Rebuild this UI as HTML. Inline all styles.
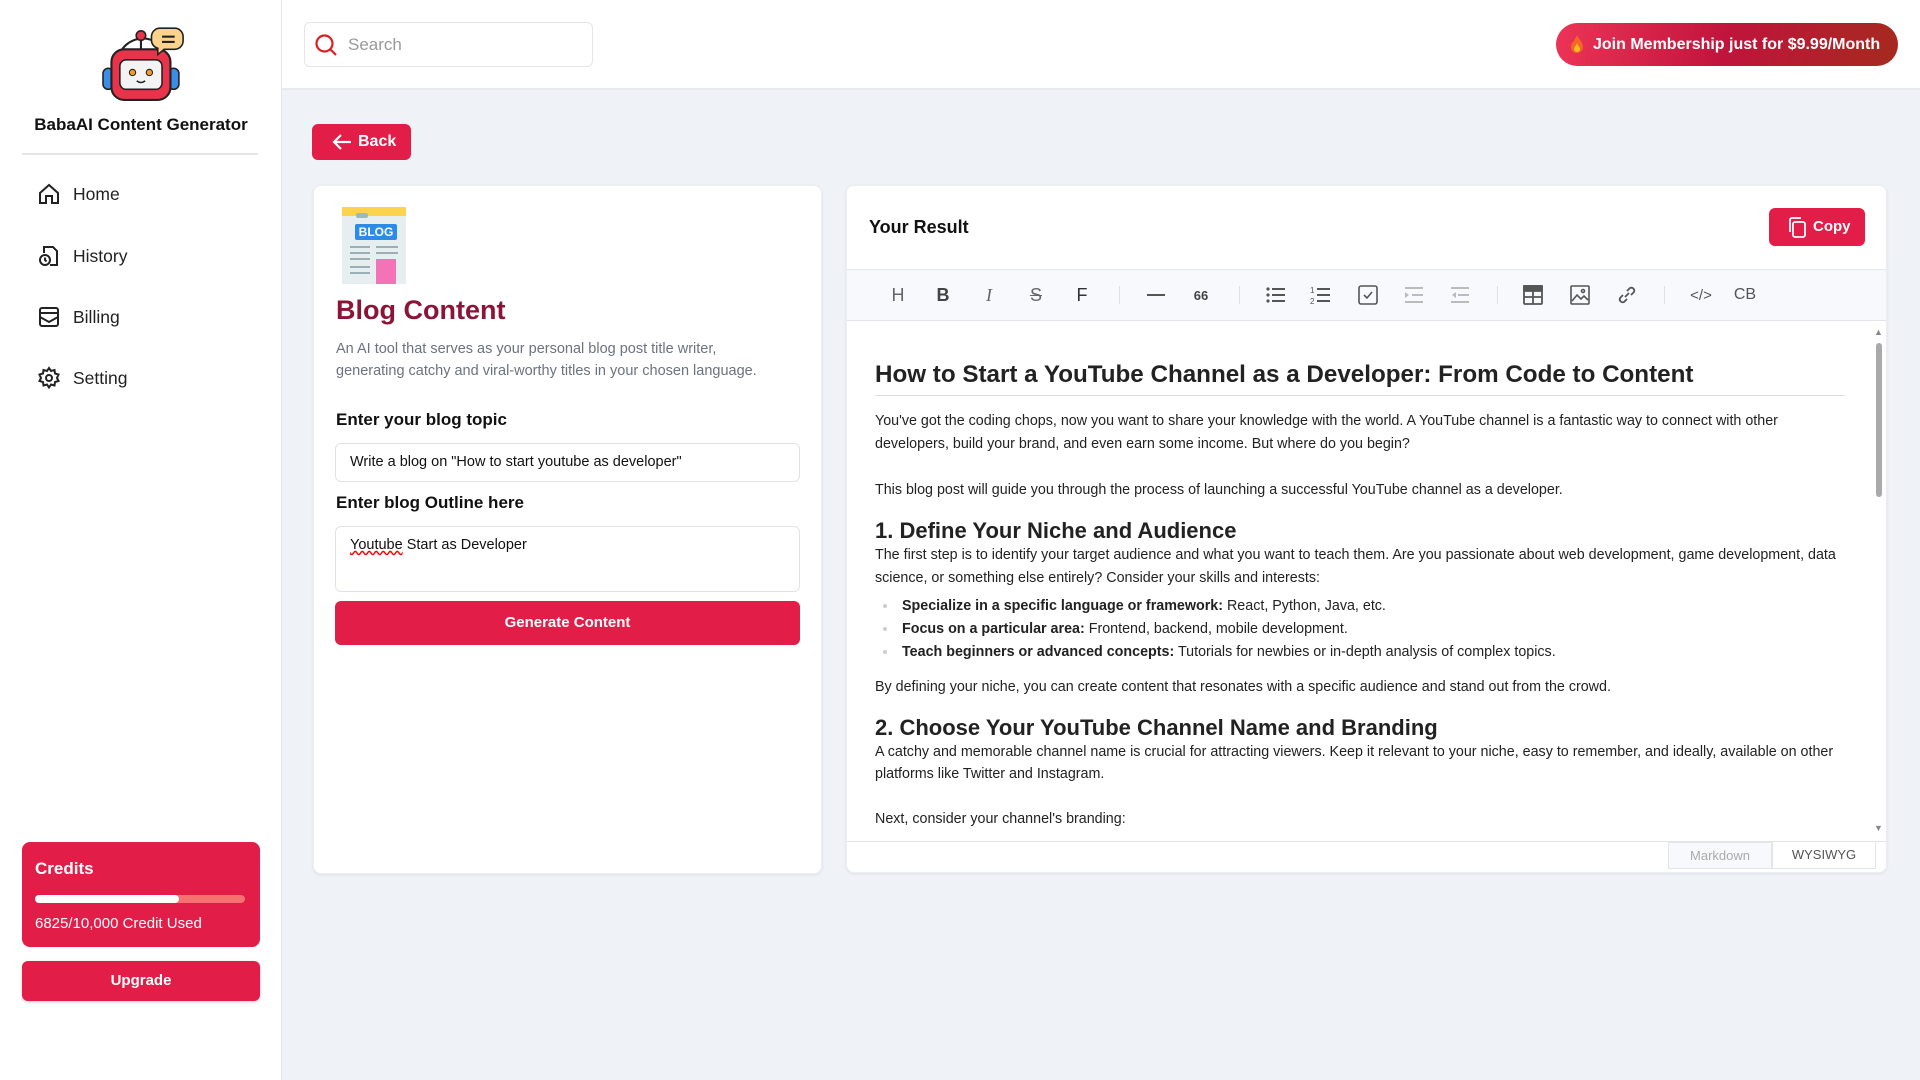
<!DOCTYPE html>
<html><head><meta charset="utf-8"><style>
*{margin:0;padding:0;box-sizing:border-box}
body{width:1920px;height:1080px;overflow:hidden;background:#eff2f7;font-family:"Liberation Sans",sans-serif;position:relative;color:#111}
.a{position:absolute}
.side{left:0;top:0;width:282px;height:1080px;background:#fff;border-right:1px solid #e3e6ea}
.nav{left:37px;font-size:17.5px;color:#222;display:flex;align-items:center;gap:12px}
.nav svg{width:24px;height:24px}
.hdr{left:282px;top:0;width:1638px;height:90px;background:#fff;border-bottom:2px solid #e6e9ee}
.card{background:#fff;border-radius:8px;box-shadow:0 1px 3px rgba(0,0,0,.08);border:1px solid #eceef2}
.red{background:#e11d48;color:#fff;border-radius:6px}
.ed p{position:absolute;left:875px;font-family:Arial,"Liberation Sans",sans-serif;font-size:14.3px;color:#222;white-space:nowrap}
.ed h{position:absolute;left:875px;font-family:Arial,"Liberation Sans",sans-serif;font-weight:bold;color:#222;white-space:nowrap}
.tb{position:absolute;top:284px;width:24px;height:22px;display:flex;align-items:center;justify-content:center;color:#555;font-size:18px;font-family:Arial,sans-serif}
.sep{position:absolute;top:286px;width:1px;height:18px;background:#dde0e5}
.dot{position:absolute;left:883px;width:4px;height:4px;border-radius:2px;background:#ccc}
</style></head><body>
<div class="a side"></div>
<svg class="a" style="left:98px;top:24px" width="88" height="78" viewBox="0 0 82 74">
<path d="M18 40 A24 24 0 0 1 60 22" fill="none" stroke="#222" stroke-width="2"/>
<line x1="40" y1="14" x2="40" y2="24" stroke="#222" stroke-width="2"/>
<circle cx="40" cy="11" r="4.5" fill="#e8334a" stroke="#222" stroke-width="1.5"/>
<rect x="4" y="42" width="10" height="20" rx="5" fill="#3a8ee6" stroke="#222" stroke-width="1.5"/>
<rect x="66" y="42" width="10" height="20" rx="5" fill="#3a8ee6" stroke="#222" stroke-width="1.5"/>
<rect x="12" y="24" width="56" height="48" rx="12" fill="#e8334a" stroke="#222" stroke-width="2"/>
<rect x="20" y="34" width="40" height="28" rx="6" fill="#f3f3f3" stroke="#222" stroke-width="1.5"/>
<circle cx="32" cy="46" r="3" fill="#f39c28" stroke="#222"/><circle cx="48" cy="46" r="3" fill="#f39c28" stroke="#222"/>
<path d="M36 54 q4 3 8 0" fill="none" stroke="#222" stroke-width="1.5"/>
<path d="M58 4 h14 a8 8 0 0 1 8 8 v4 a8 8 0 0 1 -8 8 h-10 l-6 5 v-6 a8 8 0 0 1 -6 -7 v-4 a8 8 0 0 1 8 -8z" fill="#fbd38d" stroke="#222" stroke-width="1.5"/>
<line x1="60" y1="12" x2="72" y2="12" stroke="#222" stroke-width="2"/><line x1="60" y1="17" x2="72" y2="17" stroke="#222" stroke-width="2"/>
</svg>
<div class="a" style="left:0;width:282px;top:115px;text-align:center;font-weight:bold;font-size:17px">BabaAI Content Generator</div>
<div class="a" style="left:22px;top:153px;width:236px;height:2px;background:#e3e5e8"></div>
<div class="a nav" style="top:182px"><svg viewBox="0 0 24 24" fill="none" stroke="#222" stroke-width="2"><path d="M3 11 L12 3 L21 11 V21 H15 V14 H9 V21 H3Z"/></svg>Home</div>
<div class="a nav" style="top:244px"><svg viewBox="0 0 24 24" fill="none" stroke="#222" stroke-width="2"><path d="M7 9V3h9l4 4v14H13"/><circle cx="8" cy="16" r="5"/><path d="M8 13.5V16l1.5 1.5"/></svg>History</div>
<div class="a nav" style="top:305px"><svg viewBox="0 0 24 24" fill="none" stroke="#222" stroke-width="2"><rect x="3" y="3" width="18" height="18" rx="2"/><path d="M3 8h18M3 12l9 5 9-5"/></svg>Billing</div>
<div class="a nav" style="top:366px"><svg viewBox="0 0 24 24" fill="none" stroke="#222" stroke-width="2"><circle cx="12" cy="12" r="3"/><path d="M12 2l2 3 3.5-1 .5 3.5 3.5 1-1.5 3.5 1.5 3-3.5 1-.5 3.5-3.5-1-2 3-2-3-3.5 1-.5-3.5-3.5-1L4 12 2.5 8.5 6 7.5 6.5 4 10 5z"/></svg>Setting</div>
<div class="a red" style="left:22px;top:842px;width:238px;height:105px;border-radius:8px"></div>
<div class="a" style="left:35px;top:859px;color:#fff;font-weight:bold;font-size:17px">Credits</div>
<div class="a" style="left:35px;top:895px;width:210px;height:8px;border-radius:4px;background:#f87171"></div>
<div class="a" style="left:35px;top:895px;width:144px;height:8px;border-radius:4px;background:#fff"></div>
<div class="a" style="left:35px;top:915px;color:#fff;font-size:15px">6825/10,000 Credit Used</div>
<div class="a red" style="left:22px;top:961px;width:238px;height:40px;text-align:center;line-height:40px;font-weight:bold;font-size:15px;box-shadow:0 1px 3px rgba(0,0,0,.2)">Upgrade</div>

<div class="a hdr"></div>
<div class="a" style="left:304px;top:22px;width:289px;height:45px;border:1px solid #e3e5e8;border-radius:6px;background:#fff"></div>
<svg class="a" style="left:314px;top:33px" width="24" height="24" viewBox="0 0 24 24" fill="none" stroke="#e11d1d" stroke-width="2.2"><circle cx="10.5" cy="10.5" r="8"/><path d="M16.5 16.5L22 22"/></svg>
<div class="a" style="left:348px;top:35px;font-size:17px;color:#999">Search</div>
<div class="a" style="left:1556px;top:23px;width:342px;height:43px;border-radius:22px;background:linear-gradient(100deg,#ec3457,#c0143c 50%,#a52a1e);color:#fff;font-size:16px;font-weight:bold;line-height:43px;padding-left:37px;white-space:nowrap">Join Membership just for $9.99/Month</div>
<svg class="a" style="left:1570px;top:34px" width="14" height="20" viewBox="0 0 14 20"><path d="M7 1C9 6 13 8 13 13a6 6 0 0 1-12 0C1 9 4 8 7 1z" fill="#f26722"/><path d="M7 9c1 3 3 4 3 6a3 3 0 0 1-6 0c0-2 2-3 3-6z" fill="#fbbf24"/></svg>

<div class="a red" style="left:312px;top:124px;width:99px;height:36px;font-weight:bold;font-size:16px;line-height:36px;padding-left:46px">Back</div>
<svg class="a" style="left:331px;top:131px" width="22" height="22" viewBox="0 0 22 22" fill="none" stroke="#fff" stroke-width="2.2"><path d="M20 11H3M10 4l-7 7 7 7"/></svg>

<div class="a card" style="left:313px;top:185px;width:509px;height:689px"></div>
<svg class="a" style="left:342px;top:207px" width="64" height="77" viewBox="0 0 64 77">
<rect x="0" y="0" width="64" height="77" fill="#e6eef0"/><rect x="0" y="0" width="64" height="9" fill="#fcd34d"/>
<rect x="14" y="6" width="12" height="5" rx="2" fill="#9bb"/>
<rect x="13" y="17" width="42" height="16" rx="2" fill="#2b8be6"/><text x="34" y="29" text-anchor="middle" font-family="Liberation Sans" font-weight="bold" font-size="12" fill="#fff">BLOG</text>
<g stroke="#9bb0b5" stroke-width="2"><path d="M8 40h20M34 40h22M8 46h20M34 46h22M8 52h20M8 60h20M8 66h20"/></g>
<rect x="34" y="52" width="20" height="25" fill="#f472b6"/>
</svg>
<div class="a" style="left:336px;top:295px;font-size:27px;font-weight:bold;color:#8b1538">Blog Content</div>
<div class="a" style="left:336px;top:338px;font-size:14.5px;color:#6b7280;line-height:22px">An AI tool that serves as your personal blog post title writer,<br>generating catchy and viral-worthy titles in your chosen language.</div>
<div class="a" style="left:336px;top:410px;font-size:17px;font-weight:bold">Enter your blog topic</div>
<div class="a" style="left:335px;top:443px;width:465px;height:39px;border:1px solid #e0e2e6;border-radius:6px;font-size:14.5px;line-height:37px;padding-left:14px">Write a blog on "How to start youtube as developer"</div>
<div class="a" style="left:336px;top:493px;font-size:17px;font-weight:bold">Enter blog Outline here</div>
<div class="a" style="left:335px;top:526px;width:465px;height:66px;border:1px solid #e0e2e6;border-radius:6px;font-size:14.5px;padding:10px 14px"><span style="text-decoration:underline wavy red">Youtube</span> Start as Developer</div>
<div class="a red" style="left:335px;top:601px;width:465px;height:44px;text-align:center;line-height:44px;font-weight:bold;font-size:15px">Generate Content</div>

<div class="a card" style="left:846px;top:185px;width:1041px;height:688px"></div>
<div class="a" style="left:869px;top:217px;font-size:18px;font-weight:bold;color:#111">Your Result</div>
<div class="a red" style="left:1769px;top:208px;width:96px;height:38px;font-weight:bold;font-size:15px;line-height:38px;padding-left:44px">Copy</div>
<svg class="a" style="left:1786px;top:216px" width="22" height="22" viewBox="0 0 22 22" fill="none" stroke="#fff" stroke-width="1.8"><rect x="7" y="6" width="12" height="15" rx="2"/><path d="M4 16V4a2 2 0 0 1 2-2h9"/></svg>
<div class="a" style="left:847px;top:269px;width:1039px;height:52px;background:#f7f9fc;border-top:1px solid #e2e5ea;border-bottom:1px solid #e2e5ea"></div>
<div class="tb" style="left:886px;color:#666">H</div>
<div class="tb" style="left:931px;font-weight:bold;color:#444">B</div>
<div class="tb" style="left:977px;font-style:italic;font-family:'Liberation Serif',serif;color:#666">I</div>
<div class="tb" style="left:1024px;text-decoration:line-through;color:#666">S</div>
<div class="tb" style="left:1070px;color:#333">F</div>
<div class="sep" style="left:1119px"></div>
<div class="tb" style="left:1144px"><div style="width:18px;height:2px;background:#555"></div></div>
<div class="tb" style="left:1189px;font-size:13px;font-weight:bold;color:#444">66</div>
<div class="sep" style="left:1239px"></div>
<svg class="tb" style="left:1264px" viewBox="0 0 24 22" fill="#555"><circle cx="4" cy="5" r="1.6"/><circle cx="4" cy="11" r="1.6"/><circle cx="4" cy="17" r="1.6"/><rect x="8" y="4" width="13" height="2"/><rect x="8" y="10" width="13" height="2"/><rect x="8" y="16" width="13" height="2"/></svg>
<svg class="tb" style="left:1309px" viewBox="0 0 24 22" fill="#555"><text x="1" y="9" font-size="8" font-family="Arial">1</text><text x="1" y="20" font-size="8" font-family="Arial">2</text><rect x="8" y="4" width="13" height="2"/><rect x="8" y="10" width="13" height="2"/><rect x="8" y="16" width="13" height="2"/></svg>
<svg class="tb" style="left:1356px" viewBox="0 0 24 22" fill="none" stroke="#555" stroke-width="1.6"><rect x="3" y="2" width="18" height="18" rx="2"/><path d="M8 11l3 3 5-6"/></svg>
<svg class="tb" style="left:1402px" viewBox="0 0 24 22" fill="#bbb"><rect x="3" y="3" width="18" height="2"/><rect x="10" y="10" width="11" height="2"/><rect x="3" y="17" width="18" height="2"/><path d="M3 8l4 3-4 3z"/></svg>
<svg class="tb" style="left:1448px" viewBox="0 0 24 22" fill="#bbb"><rect x="3" y="3" width="18" height="2"/><rect x="10" y="10" width="11" height="2"/><rect x="3" y="17" width="18" height="2"/><path d="M8 8l-4 3 4 3z"/></svg>
<div class="sep" style="left:1497px"></div>
<svg class="tb" style="left:1521px" viewBox="0 0 24 22" fill="none" stroke="#555" stroke-width="1.8"><rect x="3" y="2" width="18" height="18" rx="1"/><path d="M3 7h18M3 13h18M12 7v13"/><rect x="3" y="2" width="18" height="4" fill="#555"/></svg>
<svg class="tb" style="left:1568px" viewBox="0 0 24 22" fill="none" stroke="#555" stroke-width="1.6"><rect x="3" y="2" width="18" height="18" rx="1"/><path d="M4 17l5-6 4 4 3-3 4 4"/><circle cx="15" cy="7" r="1.5"/></svg>
<svg class="tb" style="left:1615px" viewBox="0 0 24 22" fill="none" stroke="#555" stroke-width="1.8"><path d="M10 13l4-4M8 11l-3 3a3 3 0 0 0 4 4l3-3M16 11l3-3a3 3 0 0 0-4-4l-3 3"/></svg>
<div class="sep" style="left:1664px"></div>
<div class="tb" style="left:1688px;font-size:15px;width:26px;color:#555">&lt;/&gt;</div>
<div class="tb" style="left:1733px;font-size:16px;color:#555">CB</div>

<div class="ed">
<h style="top:361px;font-size:24.2px">How to Start a YouTube Channel as a Developer: From Code to Content</h>
<div class="a" style="left:875px;top:395px;width:970px;height:1px;background:#ddd"></div>
<p style="top:413px">You've got the coding chops, now you want to share your knowledge with the world. A YouTube channel is a fantastic way to connect with other</p>
<p style="top:436px">developers, build your brand, and even earn some income. But where do you begin?</p>
<p style="top:482px">This blog post will guide you through the process of launching a successful YouTube channel as a developer.</p>
<h style="top:518px;font-size:22px">1. Define Your Niche and Audience</h>
<p style="top:547px">The first step is to identify your target audience and what you want to teach them. Are you passionate about web development, game development, data</p>
<p style="top:570px">science, or something else entirely? Consider your skills and interests:</p>
<div class="dot" style="top:604px"></div><p style="top:598px;left:902px"><b>Specialize in a specific language or framework:</b> React, Python, Java, etc.</p>
<div class="dot" style="top:627px"></div><p style="top:621px;left:902px"><b>Focus on a particular area:</b> Frontend, backend, mobile development.</p>
<div class="dot" style="top:650px"></div><p style="top:644px;left:902px"><b>Teach beginners or advanced concepts:</b> Tutorials for newbies or in-depth analysis of complex topics.</p>
<p style="top:679px">By defining your niche, you can create content that resonates with a specific audience and stand out from the crowd.</p>
<h style="top:715px;font-size:22px">2. Choose Your YouTube Channel Name and Branding</h>
<p style="top:744px">A catchy and memorable channel name is crucial for attracting viewers. Keep it relevant to your niche, easy to remember, and ideally, available on other</p>
<p style="top:766px">platforms like Twitter and Instagram.</p>
<p style="top:811px">Next, consider your channel's branding:</p>
</div>
<div class="a" style="left:1876px;top:343px;width:6px;height:154px;border-radius:3px;background:#aaa"></div>
<div class="a" style="left:1874px;top:327px;font-size:9px;color:#888">▲</div>
<div class="a" style="left:1874px;top:823px;font-size:9px;color:#888">▼</div>
<div class="a" style="left:847px;top:841px;width:1039px;height:1px;background:#e3e5e8"></div>
<div class="a" style="left:1668px;top:842px;width:104px;height:27px;background:#f7f9fc;border:1px solid #e3e5e8;font-family:Arial,sans-serif;font-size:13px;color:#aaa;text-align:center;line-height:25px">Markdown</div>
<div class="a" style="left:1772px;top:842px;width:104px;height:27px;background:#fff;border:1px solid #e3e5e8;border-top:none;font-family:Arial,sans-serif;font-size:13px;color:#555;text-align:center;line-height:25px">WYSIWYG</div>
</body></html>
